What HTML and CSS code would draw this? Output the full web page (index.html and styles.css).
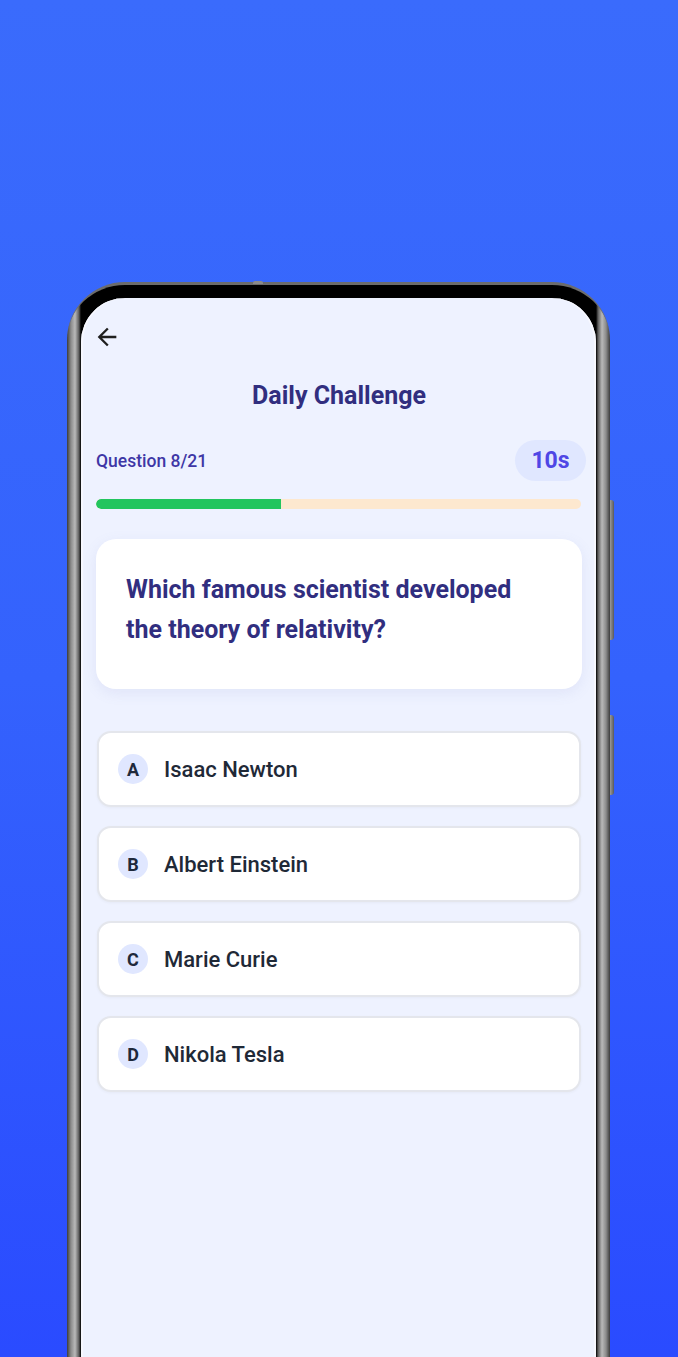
FILE: index.html
```html
<!DOCTYPE html>
<html lang="en">
<head>
<meta charset="utf-8">
<meta name="viewport" content="width=device-width, initial-scale=1.0">
<title>Daily Challenge</title>
<link rel="stylesheet" href="styles.css">
</head>
<body>
<div class="stage">
    <div class="phone">
        <span class="btn-top"></span>
        <span class="btn-side btn-power"></span>
        <span class="btn-side btn-vol"></span>
        <div class="screen">
            <div class="topbar">
                <svg class="back" viewBox="0 0 24 24" width="28" height="28"><path d="M20 11H7.83l5.59-5.59L12 4l-8 8 8 8 1.41-1.41L7.83 13H20v-2z" fill="#1f1f1f"/></svg>
            </div>
            <h1 class="title">Daily Challenge</h1>
            <div class="status">
                <span class="count">Question 8/21</span>
                <span class="timer">10s</span>
            </div>
            <div class="progress"><div class="progress-fill" style="width:38.1%"></div></div>
            <div class="question">Which famous scientist developed the theory of relativity?</div>
            <ul class="options">
                <li><span class="letter">A</span>Isaac Newton</li>
                <li><span class="letter">B</span>Albert Einstein</li>
                <li><span class="letter">C</span>Marie Curie</li>
                <li><span class="letter">D</span>Nikola Tesla</li>
            </ul>
        </div>
    </div>
</div>
</body>
</html>
```

FILE: styles.css
```css
*{margin:0;padding:0;box-sizing:border-box}
body{height:1357px;overflow:hidden;background:linear-gradient(180deg,#3a6bfc 0%,#3462fd 50%,#2a4bff 100%);font-family:Roboto,"Noto Sans",sans-serif}
.stage{display:flex;justify-content:center;padding:282px 0 0 0}
.phone{position:relative;width:543px;height:1100px;margin-left:-1px;border-radius:58px 58px 0 0;border-top:3px solid #6c6c6c;padding:13px 14px 0 14px;
    background:linear-gradient(90deg,#3c3c3c 0,#8c8c8c 4px,#b9b9b9 8px,#5c5c5c 12px,#000 14px,#000 calc(100% - 14px),#5c5c5c calc(100% - 12px),#b9b9b9 calc(100% - 8px),#8c8c8c calc(100% - 4px),#3c3c3c 100%)}
.btn-top{position:absolute;top:-4px;left:186px;width:10px;height:3px;background:#8a8a8a;border-radius:2px 2px 0 0}
.btn-side{position:absolute;right:-4px;width:4px;background:linear-gradient(90deg,#9a9a9a,#5a5a5a);border-radius:0 3px 3px 0}
.btn-power{top:215px;height:140px}
.btn-vol{top:430px;height:80px}
.screen{height:100%;background:#eef2ff;border-radius:44px 44px 0 0;padding:0 14px 0 15px;box-shadow:inset 2px 0 0 #f7f8ff,inset -2px 0 0 #f7f8ff}
.topbar{height:52px;padding-top:25px}
.back{display:block;margin-left:-3px}
.title{margin-top:31px;text-align:center;font-size:25px;line-height:30px;font-weight:700;color:#312e7f}
.status{margin-top:29px;display:flex;justify-content:space-between;align-items:center;margin-right:-4px}
.count{font-size:17.5px;font-weight:500;color:#3e37a6}
.timer{height:41px;width:71px;border-radius:21px;background:#e0e7ff;color:#4f46e5;font-size:23px;font-weight:700;display:flex;align-items:center;justify-content:center}
.progress{margin-top:18px;height:10px;border-radius:5px;background:#fde8cf;overflow:hidden;margin-right:1px}
.progress-fill{height:100%;background:#22c55e;border-radius:5px 0 0 5px}
.question{margin-top:30px;height:150px;background:#fff;border-radius:20px;padding:31px 44px 0 30px;font-size:25px;line-height:40px;font-weight:700;color:#312e7f;box-shadow:0 4px 14px rgba(120,130,200,0.12)}
.options{list-style:none;margin:42px 1px 0 1px;display:flex;flex-direction:column;gap:19px}
.options li{height:76px;background:#fff;border:2px solid #e4e6ec;border-radius:14px;display:flex;align-items:center;padding-left:19px;font-size:22px;font-weight:500;color:#1f2937;box-shadow:0 1px 3px rgba(0,0,0,0.04)}
.letter{width:30px;height:30px;border-radius:50%;background:#e0e7ff;display:flex;align-items:center;justify-content:center;font-size:18px;font-weight:700;color:#1e293b;margin-right:16px}
```
